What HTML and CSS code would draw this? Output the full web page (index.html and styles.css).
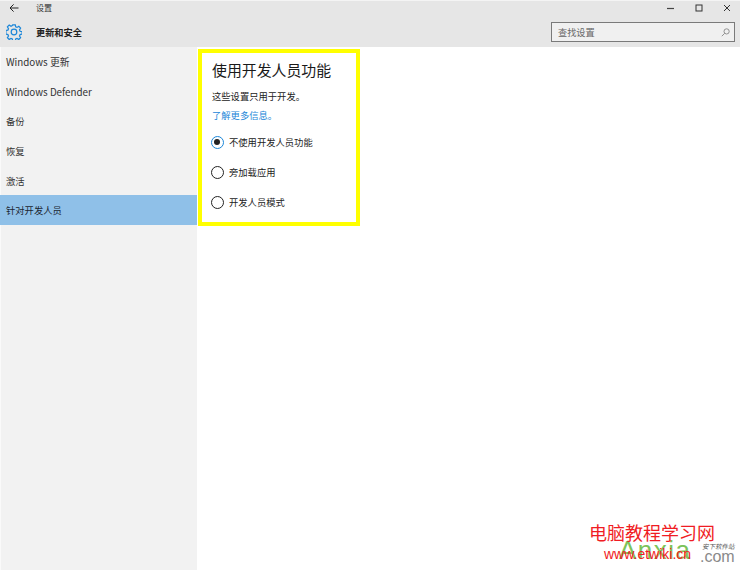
FILE: index.html
```html
<!DOCTYPE html>
<html lang="zh">
<head>
<meta charset="utf-8">
<title>设置</title>
<link rel="stylesheet" href="styles.css">
</head>
<body>
<div class="window">
  <header class="header">
    <div class="titlebar">
      <svg class="back" width="10" height="10" viewBox="0 0 10 10"><path d="M9.5 5H1M4.6 1.4 1 5l3.6 3.6" fill="none" stroke="#222" stroke-width="1"/></svg>
      <span class="apptitle">设置</span>
      <div class="controls">
        <svg width="8" height="8" viewBox="0 0 8 8"><path d="M0 4.5H7" stroke="#444" stroke-width="1.2"/></svg>
        <svg width="8" height="8" viewBox="0 0 8 8"><rect x="1" y="1" width="6" height="6" fill="none" stroke="#333" stroke-width="1"/></svg>
        <svg width="8" height="8" viewBox="0 0 8 8"><path d="M1 1 7 7M7 1 1 7" stroke="#333" stroke-width="1"/></svg>
      </div>
    </div>
    <div class="subbar">
      <svg class="gear" width="16" height="16" viewBox="0 0 16 16"><path d="M6.7.8h2.6l.4 2 1.3.6 1.8-1.1 1.8 1.8-1.1 1.8.6 1.4 2 .4v2.5l-2 .4-.6 1.4 1.1 1.7-1.8 1.8-1.8-1.1-1.3.6-.4 2H6.7l-.4-2-1.3-.6-1.8 1.1-1.8-1.8 1.1-1.7-.6-1.4-2-.4V6.5l2-.4.6-1.4-1.1-1.8 1.8-1.8L5 2.2l1.3-.6z" fill="none" stroke="#1b86d8" stroke-width="1.2"/><circle cx="8" cy="8" r="2.8" fill="none" stroke="#1b86d8" stroke-width="1.2"/></svg>
      <span class="section">更新和安全</span>
      <div class="search">
        <span>查找设置</span>
        <svg width="9" height="9" viewBox="0 0 9 9"><circle cx="5.6" cy="3.4" r="2.6" fill="none" stroke="#888" stroke-width=".9"/><path d="M3.7 5.3.8 8.2" stroke="#888" stroke-width=".9"/></svg>
      </div>
    </div>
  </header>
  <div class="main">
    <nav class="sidebar">
      <div class="navitem">Windows 更新</div>
      <div class="navitem">Windows Defender</div>
      <div class="navitem cjk">备份</div>
      <div class="navitem cjk">恢复</div>
      <div class="navitem cjk">激活</div>
      <div class="navitem cjk active">针对开发人员</div>
    </nav>
    <section class="content">
      <div class="panel">
        <h1>使用开发人员功能</h1>
        <p class="desc">这些设置只用于开发。</p>
        <a class="link">了解更多信息。</a>
        <div class="radios">
          <div class="radio"><span class="dot on"></span>不使用开发人员功能</div>
          <div class="radio"><span class="dot"></span>旁加载应用</div>
          <div class="radio"><span class="dot"></span>开发人员模式</div>
        </div>
      </div>
    </section>
  </div>
  <div class="watermark">
    <div class="wm-back">Anxia</div>
    <div class="wm-com"><span>安下软件站</span>.com</div>
    <div class="wm-title">电脑教程学习网</div>
    <div class="wm-url">www.etwiki.cn</div>
  </div>
</div>
</body>
</html>
```
FILE: styles.css
```css
* { box-sizing: border-box; }
html, body { margin: 0; padding: 0; }
body {
  width: 740px;
  height: 570px;
  overflow: hidden;
  background: #fff;
  font-family: "Noto Sans CJK SC", "Liberation Sans", sans-serif;
  color: #222;
}
.window { position: relative; width: 740px; height: 570px; display: flex; flex-direction: column; }
.header { height: 47px; background: #e6e6e6; border-top: 1px solid #f4f4f4; flex: none; }
.titlebar { height: 14px; display: flex; align-items: center; }
.back { margin-left: 9px; }
.apptitle { margin-left: 17px; font-size: 8px; color: #333; line-height: 12px; }
.controls { margin-left: auto; display: flex; gap: 20px; padding-right: 9px; }
.subbar { height: 32px; padding-top: 2px; display: flex; align-items: center; }
.gear { margin-left: 6px; }
.section { margin-left: 14px; font-size: 9.2px; font-weight: 700; color: #222; }
.search {
  margin-left: auto;
  margin-right: 5px;
  width: 184px;
  height: 20px;
  background: #f0f0f0;
  border: 1.5px solid #7a7a7a;
  display: flex;
  align-items: center;
  justify-content: space-between;
  padding: 0 4px 0 6px;
  font-size: 9.2px;
  color: #666;
}
.main { flex: 1; display: flex; min-height: 0; }
.sidebar { width: 197px; background: #f2f2f2; border-left: 1px solid #fafafa; flex: none; }
.navitem {
  height: 29.7px;
  padding-left: 5px;
  display: flex;
  align-items: center;
  font-size: 9.8px;
  color: #333;
}
.cjk { font-size: 9.3px; }
.active { background: #8fc0e8; color: #1a2530; margin-left: -1px; padding-left: 6px; }
.content { flex: 1; padding: 2px 0 0 1px; }
.panel {
  width: 162px;
  height: 177px;
  border: 4px solid #ffff00;
  padding: 7px 0 0 10px;
}
h1 { margin: 0; font-size: 14.9px; font-weight: 400; line-height: 20px; color: #1a1a1a; }
.desc { margin: 9px 0 0; font-size: 9.3px; line-height: 14px; color: #222; }
.link { display: block; margin-top: 5px; font-size: 9.3px; line-height: 14px; color: #1b86d8; }
.radios { margin-top: 5px; display: flex; flex-direction: column; }
.radio { height: 30px; display: flex; align-items: center; font-size: 9.3px; color: #222; }
.dot {
  width: 13px;
  height: 13px;
  margin-left: -1px;
  margin-right: 5px;
  border: 1.4px solid #222;
  border-radius: 50%;
  flex: none;
}
.dot.on { border-color: #1b86d8; position: relative; }
.dot.on::after {
  content: "";
  position: absolute;
  left: 2px;
  top: 2px;
  width: 6.2px;
  height: 6.2px;
  border-radius: 50%;
  background: #222;
}
.watermark { position: absolute; left: 0; top: 0; width: 740px; height: 570px; pointer-events: none; }
.wm-back {
  position: absolute;
  left: 619px;
  top: 535px;
  font: 400 26px/30px "Liberation Sans", sans-serif;
  letter-spacing: 1.5px;
  color: #7cc35a;
}
.wm-com {
  position: absolute;
  left: 700px;
  top: 543px;
  width: 40px;
  font: 400 16px/13px "Liberation Sans", sans-serif;
  color: #8a8a8a;
}
.wm-com span {
  display: block;
  font: italic 400 6.5px/7px "Noto Sans CJK SC", sans-serif;
  color: #555;
  padding-left: 2px;
}
.wm-title {
  position: absolute;
  left: 589px;
  top: 521px;
  font-size: 18px;
  line-height: 22px;
  color: #f01c24;
  white-space: nowrap;
}
.wm-url {
  position: absolute;
  left: 604px;
  top: 546px;
  font: 400 14px/16px "Liberation Sans", sans-serif;
  color: #f01c24;
  white-space: nowrap;
}
```
